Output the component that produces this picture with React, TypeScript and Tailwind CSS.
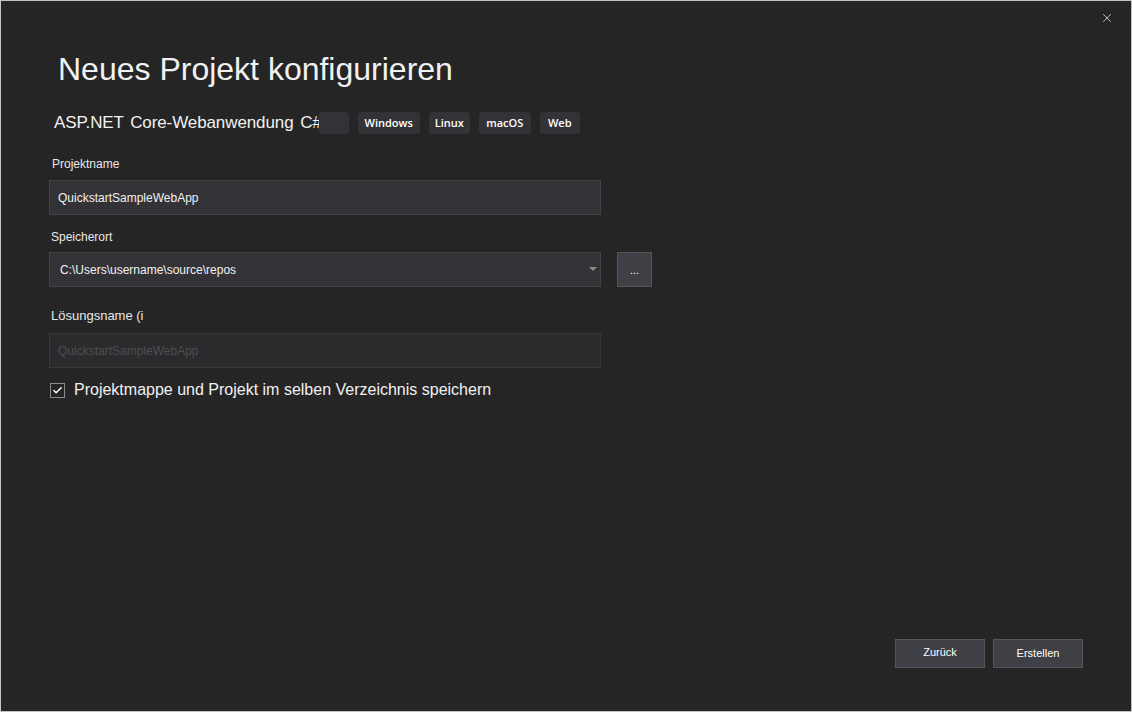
import { Check, X } from 'lucide-react';

const Tag = ({ label, w }: { label: string; w: string }) => (
    <span
        className={`h-[22px] ${w} rounded-[4px] bg-[#333337] text-white text-[11px] font-semibold flex items-center justify-center`}
        style={{ fontFamily: '"Open Sans", sans-serif' }}
    >
        {label}
    </span>
);

export default function App() {
    return (
        <div
            className="relative w-[1132px] h-[712px] bg-[#252526] border border-[#c4c4c4] text-white overflow-hidden"
            style={{ fontFamily: '"Liberation Sans", Arial, sans-serif' }}
        >
            {/* close button */}
            <X className="absolute top-[10px] right-[17px] w-[14px] h-[14px] text-[#d0d0d0]" strokeWidth={1.5} />

            <div className="flex flex-col pl-[48px] pt-[49px]">
                <h1 className="ml-[9px] text-[32px] leading-[38px] text-[#f1f1f1] font-normal">Neues Projekt konfigurieren</h1>

                {/* template info */}
                <div className="mt-[24px] ml-[5px] flex items-center h-[22px]">
                    <span className="text-[17px] text-[#f1f1f1] tracking-[-0.1px] [word-spacing:2px]">ASP.NET Core-Webanwendung C#</span>
                    <div className="-ml-[3px] flex gap-[9px]">
                        <Tag label="" w="w-[30px]" />
                        <Tag label="Windows" w="w-[62px]" />
                        <Tag label="Linux" w="w-[41px]" />
                        <Tag label="macOS" w="w-[52px]" />
                        <Tag label="Web" w="w-[40px]" />
                    </div>
                </div>

                {/* Projektname */}
                <label className="mt-[22px] ml-[3px] text-[12px] leading-[16px] text-[#e8e8e8]">Projektname</label>
                <div className="mt-[8px] w-[552px] h-[35px] bg-[#333337] border border-[#434346] flex items-center px-[8px] text-[12px] text-[#f1f1f1]">
                    QuickstartSampleWebApp
                </div>

                {/* Speicherort */}
                <label className="mt-[14px] ml-[2px] text-[12px] leading-[16px] text-[#e8e8e8]">Speicherort</label>
                <div className="mt-[7px] flex items-center gap-[16px]">
                    <div className="w-[552px] h-[35px] bg-[#333337] border border-[#434346] flex items-center justify-between pl-[10px] pr-[3px] text-[12px] text-[#f1f1f1]">
                        <span>C:\Users\username\source\repos</span>
                        <svg width="8" height="5" viewBox="0 0 8 5">
                            <polygon points="0,0 8,0 4,4" fill="#8a8a8a" />
                        </svg>
                    </div>
                    <button className="w-[35px] h-[35px] bg-[#3f3f46] border border-[#55555a] flex items-end justify-center pb-[10px] text-[11px] leading-none text-white">
                        ...
                    </button>
                </div>

                {/* Lösungsname */}
                <label className="mt-[21px] ml-[2px] text-[13px] leading-[16px] text-[#e8e8e8]">Lösungsname (i</label>
                <div className="mt-[9px] w-[552px] h-[35px] bg-[#2b2b2d] border border-[#38383b] flex items-center px-[8px] text-[12px] text-[#4e4e52]">
                    QuickstartSampleWebApp
                </div>

                {/* checkbox */}
                <div className="mt-[12px] ml-[1px] flex items-center gap-[9px]">
                    <span className="w-[15px] h-[15px] border border-[#8a8a8a] flex items-center justify-center">
                        <Check className="w-[11px] h-[11px] text-white" strokeWidth={3} />
                    </span>
                    <span className="text-[16px] leading-[20px] text-[#f1f1f1]">Projektmappe und Projekt im selben Verzeichnis speichern</span>
                </div>
            </div>

            {/* footer buttons */}
            <div className="absolute right-[48px] bottom-[43px] flex gap-[8px]">
                <button className="w-[90px] h-[29px] bg-[#3f3f46] border border-[#55555a] text-[11px] text-white pb-[3px]">Zurück</button>
                <button className="w-[90px] h-[29px] bg-[#3f3f46] border border-[#55555a] text-[11px] text-white">Erstellen</button>
            </div>
        </div>
    );
}
